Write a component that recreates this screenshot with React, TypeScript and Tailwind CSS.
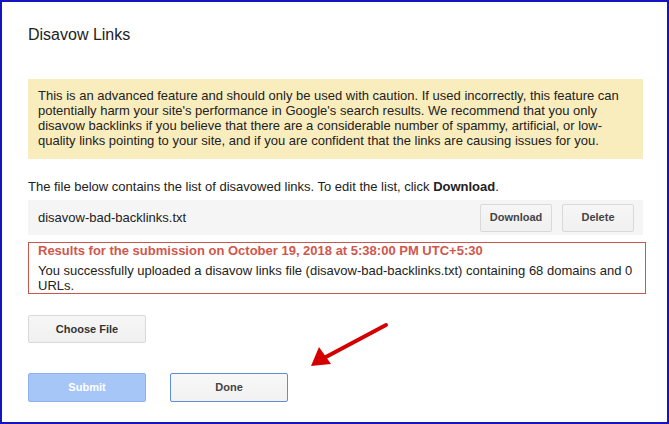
import React from 'react'

const btn =
  'h-[28px] w-[72px] rounded-[2px] border border-[#d9d9d9] bg-gradient-to-b from-[#f6f6f6] to-[#f0f0f0] text-[11px] font-bold text-[#444]'

const App: React.FC = () => {
  return (
    <div className="relative h-[424px] w-[669px] overflow-hidden border-2 border-[#1515c0] bg-white font-['Liberation_Sans',Arial,sans-serif] text-[#222]">
      <div className="pl-[26px] pr-[21px] pt-[23px]">
        {/* Header */}
        <h1 className="text-[16px] leading-[20px] text-[#222]">Disavow Links</h1>

        {/* Warning */}
        <div className="mt-[34px] w-[615px] bg-[#f9edbe] px-[10px] pb-[11px] pt-[9px] text-[13px] leading-[15px] text-[#222]">
          This is an advanced feature and should only be used with caution. If used incorrectly, this feature can
          potentially harm your site's performance in Google's search results. We recommend that you only
          disavow backlinks if you believe that there are a considerable number of spammy, artificial, or low-
          quality links pointing to your site, and if you are confident that the links are causing issues for you.
        </div>

        <p className="mt-[20px] text-[13px] leading-[15px]">
          The file below contains the list of disavowed links. To edit the list, click <b>Download</b>.
        </p>

        {/* File row */}
        <div className="mt-[6px] flex h-[35px] w-[615px] items-center justify-between bg-[#f5f5f5] pl-[10px] pr-[9px]">
          <span className="text-[13px] text-[#222]">disavow-bad-backlinks.txt</span>
          <div className="flex gap-[10px]">
            <button className={btn}>Download</button>
            <button className={btn}>Delete</button>
          </div>
        </div>

        {/* Result */}
        <div className="mt-[7px] w-[618px] border border-[#c9574f] pl-[9px] pr-[6px]">
          <p className="text-[13px] font-bold leading-[16px] text-[#d0574c]">
            Results for the submission on October 19, 2018 at 5:38:00 PM UTC+5:30
          </p>
          <p className="mt-[4px] text-[13px] leading-[15px] text-[#222]">
            You successfully uploaded a disavow links file (disavow-bad-backlinks.txt) containing 68 domains and 0
            URLs.
          </p>
        </div>

        <button className="mt-[21px] block h-[28px] w-[118px] rounded-[2px] border border-[#d9d9d9] bg-gradient-to-b from-[#f6f6f6] to-[#f0f0f0] text-[11px] font-bold text-[#333]">
          Choose File
        </button>

        <div className="mt-[30px] flex gap-[24px]">
          <button className="h-[29px] w-[118px] rounded-[2px] border border-[#8fb2ef] bg-[#a7c6f8] text-[11px] font-bold text-white">
            Submit
          </button>
          <button className="h-[29px] w-[118px] rounded-[2px] border border-[#5d8fd8] bg-gradient-to-b from-[#f8f8f8] to-[#f1f1f1] text-[11px] font-bold text-[#444]">
            Done
          </button>
        </div>
      </div>

      {/* Annotation arrow */}
      <svg className="absolute left-[305px] top-[318px]" width="86" height="52" viewBox="305 318 86 52">
        <line x1="384" y1="323" x2="322" y2="356" stroke="#d40000" strokeWidth="4" strokeLinecap="round" />
        <polygon points="309,364 317,345 329,362" fill="#d40000" />
      </svg>
    </div>
  )
}

export default App
